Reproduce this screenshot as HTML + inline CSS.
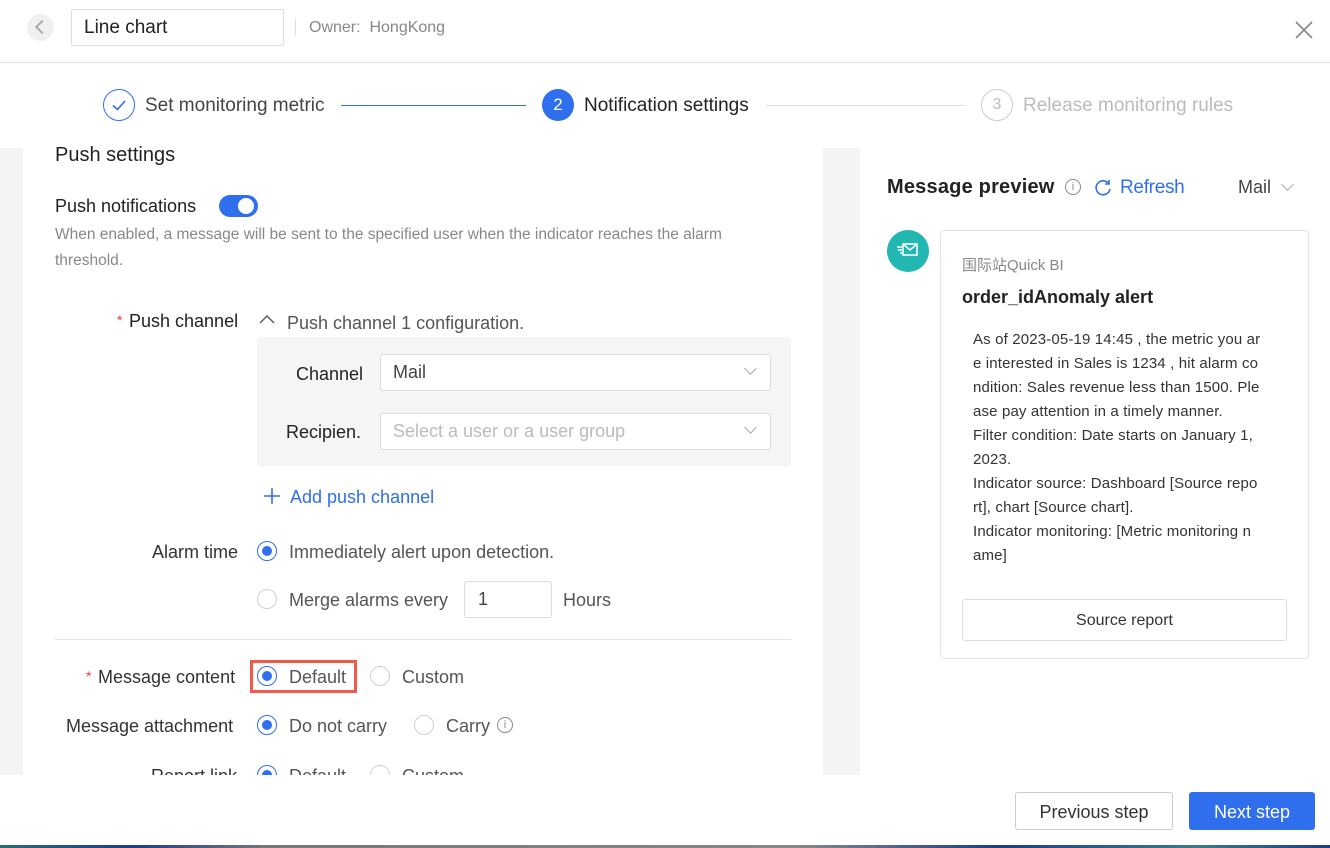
<!DOCTYPE html>
<html><head><meta charset="utf-8"><style>
*{box-sizing:border-box;margin:0;padding:0}
body{width:1330px;height:848px;overflow:hidden;background:#fff;font-family:"Liberation Sans","Noto Sans CJK SC",sans-serif;color:#333;position:relative}
.a{position:absolute;white-space:nowrap}
.radio{position:absolute;width:20px;height:20px;border-radius:50%;border:1px solid #d0d0d0;background:#fff}
.radio.on{border-color:#2f6fed}
.radio.on::after{content:"";position:absolute;left:4px;top:4px;width:10px;height:10px;border-radius:50%;background:#2f6fed}
.lbl{font-size:18px;color:#333}
.opt{font-size:18px;color:#555}
.sel{position:absolute;border:1px solid #dcdcdc;border-radius:3px;background:#fff;font-size:18px;padding:0 12px;line-height:34px}
.chev{position:absolute;width:9px;height:9px;border-right:1.5px solid #aaa;border-bottom:1.5px solid #aaa;transform:rotate(45deg)}
.msg{font-size:15px;line-height:24px;color:#333}
</style></head><body>
<div class="a" style="left:27px;top:14px;width:27px;height:27px;border-radius:50%;background:#f0f0f0"></div>
<div class="a" style="left:37px;top:22px;width:10px;height:10px;border-left:2px solid #aaa;border-bottom:2px solid #aaa;transform:rotate(45deg)"></div>
<div class="a" style="left:71px;top:9px;width:213px;height:37px;border:1px solid #ddd;border-radius:2px;font-size:19px;line-height:35px;padding-left:12px;color:#222">Line chart</div>
<div class="a" style="left:295px;top:19px;width:1px;height:16px;background:#ddd"></div>
<div class="a" style="left:309px;top:19px;font-size:16px;color:#888">Owner:&nbsp; HongKong</div>
<svg class="a" style="left:1295px;top:21px" width="18" height="18"><path d="M1 1L17 17M17 1L1 17" stroke="#888" stroke-width="1.6"/></svg>
<div class="a" style="left:0;top:62px;width:1330px;height:1px;background:#e5e5e5"></div>
<div class="a" style="left:103px;top:89px;width:32px;height:32px;border:1.3px solid #2f6fed;border-radius:50%"></div>
<svg class="a" style="left:111px;top:97px" width="16" height="16"><path d="M2 8.5L6.5 12.5L14 4" stroke="#2f6fed" stroke-width="1.6" fill="none"/></svg>
<div class="a" style="left:145px;top:95px;font-size:19px;color:#444">Set monitoring metric</div>
<div class="a" style="left:341px;top:105px;width:185px;height:1px;background:#2f6fed"></div>
<div class="a" style="left:542px;top:89px;width:32px;height:32px;background:#2f6fed;border-radius:50%;color:#fff;text-align:center;line-height:32px;font-size:17px">2</div>
<div class="a" style="left:584px;top:95px;font-size:19px;color:#222">Notification settings</div>
<div class="a" style="left:766px;top:105px;width:199px;height:1px;background:#ddd"></div>
<div class="a" style="left:981px;top:89px;width:32px;height:32px;border:1px solid #ccc;border-radius:50%;color:#bbb;text-align:center;line-height:30px;font-size:16px">3</div>
<div class="a" style="left:1023px;top:95px;font-size:19px;color:#bbb">Release monitoring rules</div>
<div class="a" style="left:0;top:148px;width:23px;height:627px;background:#f4f4f4"></div>
<div class="a" style="left:823px;top:148px;width:37px;height:627px;background:#f4f4f4"></div>
<div class="a" style="left:55px;top:144px;font-size:20px;color:#222;font-weight:500">Push settings</div>
<div class="a lbl" style="left:55px;top:196px;color:#222">Push notifications</div>
<div class="a" style="left:219px;top:195px;width:39px;height:22px;border-radius:11px;background:#2f6fed"></div>
<div class="a" style="left:238px;top:198px;width:16px;height:16px;border-radius:50%;background:#fff"></div>
<div class="a" style="left:55px;top:222px;font-size:15.5px;color:#888;line-height:26px;white-space:normal;width:720px">When enabled, a message will be sent to the specified user when the indicator reaches the alarm threshold.</div>
<div class="a" style="left:117px;top:312px;color:#f33;font-size:14px">*</div>
<div class="a lbl" style="left:129px;top:311px;color:#222">Push channel</div>
<svg class="a" style="left:259px;top:314px" width="16" height="10"><path d="M1 9L8 2L15 9" stroke="#555" stroke-width="1.4" fill="none"/></svg>
<div class="a opt" style="left:287px;top:313px">Push channel 1 configuration.</div>
<div class="a" style="left:257px;top:337px;width:534px;height:129px;background:#f5f5f5;border-radius:3px"></div>
<div class="a lbl" style="left:296px;top:364px;color:#222">Channel</div>
<div class="sel" style="left:380px;top:354px;width:391px;height:37px;color:#444">Mail</div>
<div class="chev" style="left:746px;top:364px"></div>
<div class="a lbl" style="left:286px;top:422px;color:#222">Recipien.</div>
<div class="sel" style="left:380px;top:413px;width:391px;height:37px;color:#bbb">Select a user or a user group</div>
<div class="chev" style="left:746px;top:423px"></div>
<svg class="a" style="left:263px;top:487px" width="18" height="18"><path d="M9 1V17M1 9H17" stroke="#2f6fed" stroke-width="1.6"/></svg>
<div class="a" style="left:290px;top:487px;font-size:18px;color:#2f6fed">Add push channel</div>
<div class="a lbl" style="left:152px;top:542px">Alarm time</div>
<div class="radio on" style="left:257px;top:541px"></div>
<div class="a opt" style="left:289px;top:542px">Immediately alert upon detection.</div>
<div class="radio" style="left:257px;top:589px"></div>
<div class="a opt" style="left:289px;top:590px">Merge alarms every</div>
<div class="a" style="left:464px;top:581px;width:88px;height:37px;border:1px solid #ddd;border-radius:3px;font-size:18px;line-height:35px;padding-left:13px;color:#444">1</div>
<div class="a opt" style="left:563px;top:590px">Hours</div>
<div class="a" style="left:55px;top:639px;width:736px;height:1px;background:#e5e5e5"></div>
<div class="a" style="left:86px;top:668px;color:#f33;font-size:14px">*</div>
<div class="a lbl" style="left:98px;top:667px">Message content</div>
<div class="a" style="left:250px;top:660px;width:107px;height:33px;border:3px solid #f05a4a"></div>
<div class="radio on" style="left:257px;top:666px"></div>
<div class="a opt" style="left:289px;top:667px">Default</div>
<div class="radio" style="left:370px;top:666px"></div>
<div class="a opt" style="left:402px;top:667px">Custom</div>
<div class="a lbl" style="left:66px;top:716px">Message attachment</div>
<div class="radio on" style="left:257px;top:715px"></div>
<div class="a opt" style="left:289px;top:716px">Do not carry</div>
<div class="radio" style="left:414px;top:715px"></div>
<div class="a opt" style="left:446px;top:716px">Carry</div>
<div class="a" style="left:497px;top:717px;width:16px;height:16px;border:1px solid #888;border-radius:50%;font-size:11px;text-align:center;line-height:14px;color:#888">i</div>
<div style="position:absolute;left:23px;top:755px;width:800px;height:20px;overflow:hidden">
<div class="a lbl" style="left:128px;top:11px">Report link</div>
<div class="radio on" style="left:234px;top:10px"></div>
<div class="a opt" style="left:266px;top:11px">Default</div>
<div class="radio" style="left:347px;top:10px"></div>
<div class="a opt" style="left:379px;top:11px">Custom</div>
</div>
<div class="a" style="left:887px;top:176px;font-size:20px;font-weight:bold;color:#222;letter-spacing:0.2px">Message preview</div>
<div class="a" style="left:1065px;top:179px;width:16px;height:16px;border:1px solid #888;border-radius:50%;font-size:11px;text-align:center;line-height:14px;color:#888">i</div>
<svg class="a" style="left:1094px;top:179px" width="18" height="18"><path d="M15 5A7 7 0 1 0 16 10" stroke="#2f6fed" stroke-width="1.6" fill="none"/><path d="M15 1V5H11" stroke="#2f6fed" stroke-width="1.6" fill="none"/></svg>
<div class="a" style="left:1120px;top:177px;font-size:19px;color:#2f6fed;letter-spacing:-0.3px">Refresh</div>
<div class="a" style="left:1238px;top:177px;font-size:18px;color:#444">Mail</div>
<div class="chev" style="left:1283px;top:180px"></div>
<div class="a" style="left:887px;top:230px;width:42px;height:42px;border-radius:50%;background:#22b7b0"></div>
<svg class="a" style="left:896px;top:241px" width="24" height="20"><rect x="7" y="3" width="14" height="11" fill="none" stroke="#fff" stroke-width="1.5"/><path d="M7 3L14 9L21 3" stroke="#fff" stroke-width="1.5" fill="none"/><path d="M1 6H6M2 9H6M4 12H6" stroke="#fff" stroke-width="1.5"/></svg>
<div class="a" style="left:940px;top:230px;width:369px;height:429px;border:1px solid #e3e3e3;border-radius:4px"></div>
<div class="a" style="left:962px;top:254px;font-size:15px;color:#888">国际站Quick BI</div>
<div class="a" style="left:962px;top:287px;font-size:18px;font-weight:bold;color:#222">order_idAnomaly alert</div>
<div class="a msg" style="left:973px;top:328px;white-space:normal;width:320px;letter-spacing:0.15px">As of 2023-05-19 14:45 , the metric you ar<br>e interested in Sales is 1234 , hit alarm co<br>ndition: Sales revenue less than 1500. Ple<br>ase pay attention in a timely manner.<br>Filter condition: Date starts on January 1,<br>2023.<br>Indicator source: Dashboard [Source repo<br>rt], chart [Source chart].<br>Indicator monitoring: [Metric monitoring n<br>ame]</div>
<div class="a" style="left:962px;top:599px;width:325px;height:42px;border:1px solid #ddd;border-radius:3px;text-align:center;line-height:42px;font-size:16px;color:#333">Source report</div>
<div class="a" style="left:1015px;top:792px;width:158px;height:38px;border:1px solid #ccc;border-radius:3px;text-align:center;line-height:38px;font-size:18px;color:#333">Previous step</div>
<div class="a" style="left:1189px;top:792px;width:126px;height:38px;background:#2f6fed;border-radius:3px;text-align:center;line-height:40px;font-size:18px;color:#fff">Next step</div>
<div class="a" style="left:0;top:845px;width:1330px;height:3px;background:linear-gradient(90deg,#2a6a7a 0,#1c3d8a 10%,#777 20%,#888 60%,#1c3d8a 75%,#3a7a8a 90%,#1c3d8a 100%)"></div>
</body></html>
